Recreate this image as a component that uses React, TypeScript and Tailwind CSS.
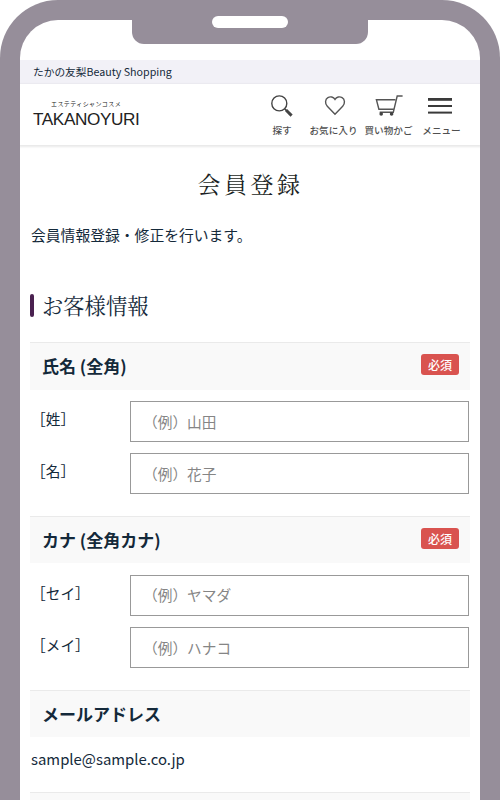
import { ReactNode } from 'react';

type Field = { label: string; name: string; placeholder: string };

const NAME_FIELDS: Field[] = [
  { label: '［姓］', name: 'lastName', placeholder: '（例）山田' },
  { label: '［名］', name: 'firstName', placeholder: '（例）花子' }
];

const KANA_FIELDS: Field[] = [
  { label: '［セイ］', name: 'lastNameKana', placeholder: '（例）ヤマダ' },
  { label: '［メイ］', name: 'firstNameKana', placeholder: '（例）ハナコ' }
];

function SearchIcon() {
  return (
    <svg width="24" height="24" viewBox="0 0 24 24" fill="none" stroke="#444">
      <circle cx="9.3" cy="9.4" r="7.5" strokeWidth="1.4" />
      <path d="M14.6 14.8l2 2" strokeWidth="1.4" />
      <path d="M16 16l5.6 5.6" strokeWidth="3" />
    </svg>
  );
}

function HeartIcon() {
  return (
    <svg width="24" height="24" viewBox="0 0 24 24" fill="none" stroke="#555">
      <path
        d="M12 20.2L4.3 12.2C1.7 9.5 2.1 5.2 4.9 3.6C7.3 2.2 10.5 2.9 12 5.4C13.5 2.9 16.7 2.2 19.1 3.6C21.9 5.2 22.3 9.5 19.7 12.2Z"
        strokeWidth="1.4"
      />
    </svg>
  );
}

function CartIcon() {
  return (
    <svg width="28" height="24" viewBox="0 0 28 24" fill="none" stroke="#555">
      <path
        d="M27.6 2H22.2L18.3 18.2H4.7M20.3 5.8H1.4L3.9 15.2H18.8"
        strokeWidth="1.4"
      />
      <circle cx="6.2" cy="19.9" r="1.8" fill="#444" stroke="none" />
      <circle cx="16.6" cy="19.9" r="1.8" fill="#444" stroke="none" />
    </svg>
  );
}

function MenuIcon() {
  return (
    <svg width="24" height="24" viewBox="0 0 24 24" fill="#3a3a3a">
      <rect y="4" width="24" height="2.8" />
      <rect y="11" width="24" height="2" />
      <rect y="17.6" width="24" height="2" />
    </svg>
  );
}

function NavItem({
  label,
  className,
  children
}: {
  label: string;
  className: string;
  children: ReactNode;
}) {
  return (
    <a
      className={`flex flex-col items-center text-[9.6px] leading-[14px] font-medium whitespace-nowrap text-[#505050] ${className}`}
    >
      {children}
      <span className="mt-[5px]">{label}</span>
    </a>
  );
}

function SectionHeader({
  title,
  required
}: {
  title?: string;
  required?: boolean;
}) {
  return (
    <div className="flex h-[47.5px] items-center justify-between border-t-[1.6px] border-[#eaeaea] bg-[#f9f9f9] px-3">
      {title && <h3 className="text-[17px] leading-6 font-bold">{title}</h3>}
      {required && (
        <span className="-mt-[3px] -mr-px flex h-[21px] w-[38px] items-center justify-center rounded-[3px] bg-[#d9534f] text-[12px] font-medium text-white">
          必須
        </span>
      )}
    </div>
  );
}

function Fields({ fields }: { fields: Field[] }) {
  return (
    <div className="flex flex-col gap-[11px] pt-[11.5px] pb-[21.5px]">
      {fields.map(field => (
        <label key={field.name} className="flex h-[41.1px]">
          <span className="w-[100px] pt-1.5 pl-px text-[14.7px] leading-6">
            {field.label}
          </span>
          <input
            name={field.name}
            placeholder={field.placeholder}
            className="w-[339px] border border-[#999] pl-3 text-[14.7px] placeholder:text-[#858585]"
          />
        </label>
      ))}
    </div>
  );
}

function App() {
  return (
    <div className="h-[800px] w-[500px] overflow-hidden bg-white font-['Noto_Sans_CJK_JP',sans-serif] text-[#14293a]">
      <div className="relative h-[900px] overflow-hidden rounded-t-[58px] border-[20px] border-b-0 border-[#968e9a] bg-white">
        <div className="absolute -top-px left-[112px] flex h-[25px] w-[236px] justify-center rounded-b-xl bg-[#968e9a]" />
        <header>
          <p className="mt-10 h-[23.5px] bg-[#f2f1f7] pl-[13px] text-[10.7px] leading-6">
            たかの友梨Beauty Shopping
          </p>
          <div className="flex h-[61.5px] justify-between pr-[11px] pl-[13px] shadow-[0_1px_2px_1px_rgba(0,0,0,0.09)]">
            <div className="w-[107px] pt-4 text-[#222]">
              <p className="pl-[18px] text-[6px] leading-[8px] tracking-[0.4px] whitespace-nowrap">
                エステティシャンコスメ
              </p>
              <p className="mt-[3px] font-['Liberation_Sans',sans-serif] text-[17.2px] leading-[16px] tracking-[-0.42px]">
                TAKANOYURI
              </p>
            </div>
            <nav className="flex pt-2.5">
              <NavItem label="探す" className="w-[44px] [&>svg]:-ml-px">
                <SearchIcon />
              </NavItem>
              <NavItem label="お気に入り" className="w-[59px] [&>svg]:ml-0.5">
                <HeartIcon />
              </NavItem>
              <NavItem label="買い物かご" className="w-[51px]">
                <CartIcon />
              </NavItem>
              <NavItem label="メニュー" className="w-[55px] [&>svg]:-ml-[4px]">
                <MenuIcon />
              </NavItem>
            </nav>
          </div>
        </header>
        <main className="px-2.5">
          <h1 className="mt-[23px] pl-px text-center font-['Noto_Serif_CJK_JP','Noto_Serif_JP','Noto_Sans_CJK_JP',serif] text-[23px] leading-8 tracking-[3.5px] text-[#1b1f24]">
            会員登録
          </h1>
          <p className="mt-[23px] pl-px text-[14.8px] leading-6">
            会員情報登録・修正を行います。
          </p>
          <div className="mt-[42px] flex h-8 items-center gap-2">
            <span className="h-[23px] w-1 rounded-sm bg-[#4a2150]" />
            <h2 className="font-['Noto_Serif_CJK_JP','Noto_Serif_JP','Noto_Sans_CJK_JP',serif] text-[21.3px] leading-8">
              お客様情報
            </h2>
          </div>
          <div className="mt-[21.2px]">
            <SectionHeader title="氏名 (全角)" required />
            <Fields fields={NAME_FIELDS} />
            <SectionHeader title="カナ (全角カナ)" required />
            <Fields fields={KANA_FIELDS} />
            <SectionHeader title="メールアドレス" />
            <p className="h-[55px] pt-2.5 pl-px text-[14.9px] leading-6">
              sample@sample.co.jp
            </p>
            <SectionHeader />
          </div>
        </main>
      </div>
      <div className="absolute top-4 left-[212px] h-3 w-[76px] rounded-full bg-white" />
    </div>
  );
}

export default App;
